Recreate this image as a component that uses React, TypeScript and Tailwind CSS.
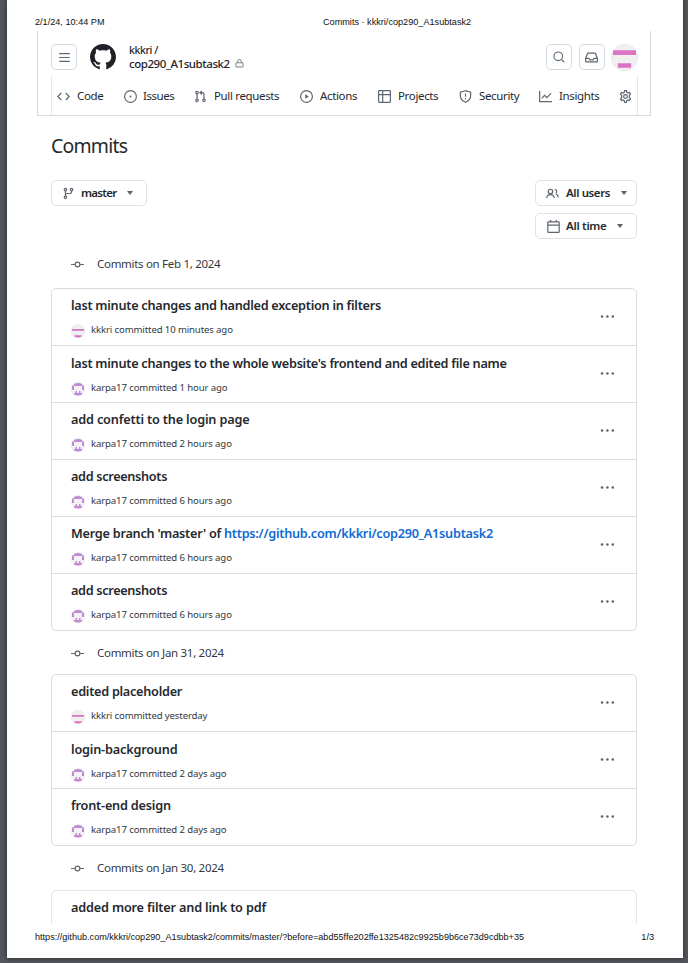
import React from "react";

const ICONS: Record<string, React.ReactNode> = {
  bars: <path d="M1.5 3.25h13M1.5 8h13M1.5 12.75h13" />,
  lock: (
    <>
      <path d="M4.75 6.5V4.2a3.25 3.25 0 0 1 6.5 0v2.3" />
      <rect x="1.75" y="6.75" width="12.5" height="7.5" rx=".8" />
    </>
  ),
  search: (
    <>
      <circle cx="7" cy="7" r="5.75" />
      <path d="m11.2 11.2 3.8 3.8" />
    </>
  ),
  inbox: (
    <path d="M.75 9.2v3.3c0 .6.5 1 1 1h12.5c.6 0 1-.4 1-1V9.2L12.9 3.1a1 1 0 0 0-1-.6H4.1a1 1 0 0 0-1 .6zM.9 9h3.9l1.3 2h3.8l1.3-2h3.9" />
  ),
  code: <path d="M5.2 3.7 1 8l4.2 4.3M10.8 3.7 15 8l-4.2 4.3" />,
  issue: (
    <>
      <circle cx="8" cy="8" r="7.25" />
      <circle cx="8" cy="8" r="1.2" fill="currentColor" stroke="none" />
    </>
  ),
  pull: (
    <>
      <circle cx="3.75" cy="3.25" r="1.5" />
      <circle cx="3.75" cy="12.75" r="1.5" />
      <circle cx="12.25" cy="12.75" r="1.5" />
      <path d="M3.75 4.8v6.4M12.25 11.2V5c0-1-.8-1.75-1.75-1.75H8M9.6 1 7.4 3.25l2.2 2.25" />
    </>
  ),
  play: (
    <>
      <circle cx="8" cy="8" r="7.25" />
      <path d="M6.4 5.2v5.6L10.9 8z" fill="currentColor" stroke="none" />
    </>
  ),
  table: (
    <path d="M1.75.75h12.5c.6 0 1 .4 1 1v12.5c0 .6-.4 1-1 1H1.75c-.6 0-1-.4-1-1V1.75c0-.6.4-1 1-1zM.75 5.75h14.5M5.75.75v14.5" />
  ),
  shield: (
    <>
      <path d="M8 .9 1.7 2.8v4.4c0 3.6 2.2 6.4 6.3 7.9 4.1-1.5 6.3-4.3 6.3-7.9V2.8z" />
      <path d="M8 4.5v3.8" />
      <circle cx="8" cy="10.7" r=".95" fill="currentColor" stroke="none" />
    </>
  ),
  graph: <path d="M.75 1v13.25H16M3.5 10.2l3.3-3.6 2.9 2.9 5.2-5.3" />,
  gear: (
    <>
      <path d="M6.9.9h2.2l.5 2 1.4.8 2-.6 1.2 2-1.5 1.5v2.8l1.5 1.5-1.2 2-2-.6-1.4.8-.5 2H6.9l-.5-2-1.4-.8-2 .6-1.2-2 1.5-1.5V6.6L1.8 5.1l1.2-2 2 .6 1.4-.8z" />
      <circle cx="8" cy="8" r="2.25" />
    </>
  ),
  branch: (
    <>
      <circle cx="4.25" cy="3.25" r="1.5" />
      <circle cx="4.25" cy="12.75" r="1.5" />
      <circle cx="11.75" cy="3.25" r="1.5" />
      <path d="M4.25 4.8v6.4M11.75 4.8v1.4c0 1-.8 1.8-1.75 1.8H6c-1 0-1.75.8-1.75 1.8" />
    </>
  ),
  people: (
    <>
      <circle cx="5.5" cy="5.5" r="2.75" />
      <path d="M.75 13.5a4.8 4.8 0 0 1 9.5 0M10.8 3.2a2.6 2.6 0 0 1 1.1 4.9M12 8.3c1.7.7 2.9 2.3 3.2 4.6" />
    </>
  ),
  calendar: (
    <path d="M1.9 2.25h12.2c.5 0 .9.4.9.9v11.2c0 .5-.4.9-.9.9H1.9c-.5 0-.9-.4-.9-.9V3.15c0-.5.4-.9.9-.9zM1 6.4h14M4.5 0v2.7M11.5 0v2.7" />
  ),
  commit: (
    <>
      <circle cx="8" cy="8" r="2.9" />
      <path d="M0 8h5M11 8h5" />
    </>
  ),
};

function Icon({ name, className = "" }: { name: string; className?: string }) {
  return (
    <svg viewBox="0 0 16 16" fill="none" stroke="currentColor" strokeWidth="1.5" className={`shrink-0 overflow-visible text-[#5f6770] ${className}`}>
      {ICONS[name]}
    </svg>
  );
}

function GithubMark() {
  return (
    <svg viewBox="0 0 16 16" className="h-[26px] w-[26px] shrink-0" fill="#1f2328">
      <path d="M8 0c4.42 0 8 3.58 8 8a8.013 8.013 0 0 1-5.45 7.59c-.4.08-.55-.17-.55-.38 0-.27.01-1.13.01-2.2 0-.75-.25-1.23-.54-1.48 1.78-.2 3.65-.88 3.65-3.95 0-.88-.31-1.59-.82-2.15.08-.2.36-1.02-.08-2.12 0 0-.67-.22-2.2.82-.64-.18-1.32-.27-2-.27-.68 0-1.36.09-2 .27-1.53-1.03-2.2-.82-2.2-.82-.44 1.1-.16 1.92-.08 2.12-.51.56-.82 1.28-.82 2.15 0 3.06 1.86 3.75 3.64 3.95-.23.2-.44.55-.51 1.07-.46.21-1.61.55-2.33-.66-.15-.24-.6-.83-1.23-.82-.67.01-.27.38.01.53.34.19.73.9.82 1.13.16.45.68 1.31 2.69.94 0 .67.01 1.3.01 1.49 0 .21-.15.45-.55.38A7.995 7.995 0 0 1 0 8c0-4.42 3.58-8 8-8Z" />
    </svg>
  );
}

function KkkriAvatar() {
  return (
    <svg viewBox="0 0 27 27" className="h-[27px] w-[27px] shrink-0">
      <circle cx="13.5" cy="13.5" r="13.2" fill="#f0f0f0" stroke="#dfe1e3" strokeWidth=".6" />
      <path d="M2 6.3h23v4.8H2zM6.8 19.2h13.4v4.6H6.8z" fill="#db74c4" />
    </svg>
  );
}

function KkkriSmallAvatar() {
  return (
    <svg viewBox="0 0 14 14" className="mt-[1px] h-[14px] w-[14px] shrink-0">
      <circle cx="7" cy="7" r="6.8" fill="#f0f0f0" stroke="#e4e1e6" strokeWidth=".4" />
      <path d="M1 5h12v1.8H1zM3.4 11.2h7.2v1.2c-2 1.4-5.2 1.4-7.2 0z" fill="#d873c2" />
    </svg>
  );
}

function KarpaAvatar() {
  return (
    <svg viewBox="0 0 14 14" className="mt-[1px] h-[14px] w-[14px] shrink-0">
      <circle cx="7" cy="7" r="6.8" fill="#f3f1f4" stroke="#e4e1e6" strokeWidth=".4" />
      <path d="M3 2Q7 0 11 2v1.5h2V8h-2V4H3v4H1V3.5h2zM3 11h1.5V9H6v2h2V9h1.5v2H11v1.5Q7 14.4 3 12.5z" fill="#c08bd4" />
    </svg>
  );
}

function Caret() {
  return <span className="ml-[1px] border-x-[3.5px] border-t-[4px] border-x-transparent border-t-[#59636e]" />;
}

function NavItem({ icon, label, className }: { icon: string; label: string; className: string }) {
  return (
    <div className={`flex shrink-0 items-center ${className}`}>
      <Icon name={icon} className="h-[13px] w-[13px]" />
      <span>{label}</span>
    </div>
  );
}

type Commit = { title: string; link?: string; user: string; when: string; height: string; pad?: string; tracking?: string };

function CommitRow({ c, last }: { c: Commit; last: boolean }) {
  return (
    <div className={`flex justify-between pr-[21px] pl-[19px] ${c.height} ${last ? "" : "border-b border-[#dcdfe2]"}`}>
      <div className={c.pad ?? "pt-[6px]"}>
        <div className={`h-[20px] text-[12.7px] leading-[20px] font-semibold text-[#25292e] ${c.tracking ?? "tracking-[-0.27px]"}`}>
          {c.title}
          {c.link && <span className="text-[#0f69d2]">{c.link}</span>}
        </div>
        <div className="mt-[6px] flex h-[18px] items-center gap-[6px] text-[9.6px] leading-[18px] tracking-[-0.13px] text-[#33383d]">
          {c.user === "kkkri" ? <KkkriSmallAvatar /> : <KarpaAvatar />}
          <span>
            {c.user} committed {c.when}
          </span>
        </div>
      </div>
      <svg viewBox="0 0 15 3" className="mb-[1px] h-[3px] w-[15px] self-center fill-[#59636e]">
        <circle cx="2" cy="1.5" r="1.25" />
        <circle cx="7.4" cy="1.5" r="1.25" />
        <circle cx="12.8" cy="1.5" r="1.25" />
      </svg>
    </div>
  );
}

function DayHeading({ label, className }: { label: string; className: string }) {
  return (
    <div className={`flex items-center gap-[13px] pl-[20px] text-[11.5px] leading-none tracking-[-0.3px] text-[#33383d] ${className}`}>
      <Icon name="commit" className="h-[13px] w-[13px]" />
      <span>{label}</span>
    </div>
  );
}

const FEB1: Commit[] = [
  { title: "last minute changes and handled exception in filters", user: "kkkri", when: "10 minutes ago", height: "h-[57px]" },
  { title: "last minute changes to the whole website's frontend and edited file name", user: "karpa17", when: "1 hour ago", height: "h-[57px]", pad: "pt-[7px]" },
  { title: "add confetti to the login page", user: "karpa17", when: "2 hours ago", height: "h-[57px]", tracking: "tracking-[-0.17px]" },
  { title: "add screenshots", user: "karpa17", when: "6 hours ago", height: "h-[57px]", tracking: "tracking-[-0.33px]" },
  { title: "Merge branch 'master' of ", link: "https://github.com/kkkri/cop290_A1subtask2", user: "karpa17", when: "6 hours ago", height: "h-[57px]", tracking: "tracking-[-0.25px]" },
  { title: "add screenshots", user: "karpa17", when: "6 hours ago", height: "h-[56px]", tracking: "tracking-[-0.33px]" },
];

const JAN31: Commit[] = [
  { title: "edited placeholder", user: "kkkri", when: "yesterday", height: "h-[57px]" },
  { title: "login-background", user: "karpa17", when: "2 days ago", height: "h-[57px]", pad: "pt-[7px]", tracking: "tracking-[-0.19px]" },
  { title: "front-end design", user: "karpa17", when: "2 days ago", height: "h-[56px]", tracking: "tracking-[-0.2px]" },
];

function CommitList({ commits }: { commits: Commit[] }) {
  return (
    <div className="rounded-[5px] border border-[#d8dcdf]">
      {commits.map((c, i) => (
        <CommitRow key={i} c={c} last={i === commits.length - 1} />
      ))}
    </div>
  );
}

export default function App() {
  return (
    <div className="h-[963px] w-[688px] overflow-hidden bg-[#54585d] pr-[5px] pl-[7px] font-['Noto_Sans','Open_Sans',sans-serif]">
      <div className="flex h-[958px] flex-col bg-white shadow-[0_0_5px_1px_#33373b]">
        <div className="flex h-[31px] shrink-0 items-center pt-[14px] pl-[28px] font-['Liberation_Sans',Arial,sans-serif] text-[9.13px] leading-none text-[#111]">
          <span className="w-[288px]">2/1/24, 10:44 PM</span>
          <span>Commits · kkkri/cop290_A1subtask2</span>
        </div>

        <header className="mr-[32px] ml-[30px] h-[85px] shrink-0 border-x border-b border-[#d5dade] pr-[12px] pl-[13px]">
          <div className="flex h-[45px] items-center pt-[7px]">
            <div className="flex size-[26px] items-center justify-center rounded-[5px] border border-[#d1d9e0]">
              <Icon name="bars" className="h-[13px] w-[13px]" />
            </div>
            <div className="ml-[13px]">
              <GithubMark />
            </div>
            <div className="ml-[13px] flex-1 text-[11.5px] leading-[13px] font-medium tracking-[-0.44px] text-[#1f2328]">
              <div className="text-[10.5px] leading-[13px] tracking-[-0.4px]">kkkri /</div>
              <div className="flex items-center gap-[5px]">
                <span>cop290_A1subtask2</span>
                <Icon name="lock" className="h-[9px] w-[9px]" />
              </div>
            </div>
            <div className="flex size-[26px] items-center justify-center rounded-[5px] border border-[#d1d9e0]">
              <Icon name="search" className="h-[12px] w-[12px]" />
            </div>
            <div className="mx-[6.5px] flex size-[26px] items-center justify-center rounded-[5px] border border-[#d1d9e0]">
              <Icon name="inbox" className="h-[13px] w-[13px]" />
            </div>
            <KkkriAvatar />
          </div>
          <nav className="flex h-[39px] items-center border-x border-[#e3e7ea] pt-[1px] pl-[5px] text-[11.5px] leading-none tracking-[-0.35px] text-[#25292e]">
            <NavItem icon="code" label="Code" className="w-[67px] gap-[7px]" />
            <NavItem icon="issue" label="Issues" className="w-[70px] gap-[6px] tracking-[-0.45px]" />
            <NavItem icon="pull" label="Pull requests" className="w-[106px] gap-[7px]" />
            <NavItem icon="play" label="Actions" className="w-[78px] gap-[7px]" />
            <NavItem icon="table" label="Projects" className="w-[81px] gap-[7px]" />
            <NavItem icon="shield" label="Security" className="w-[80px] gap-[7px]" />
            <NavItem icon="graph" label="Insights" className="w-[80px] gap-[7px]" />
            <Icon name="gear" className="h-[13px] w-[13px]" />
          </nav>
        </header>

        <main className="mr-[46px] ml-[44px] h-[808px] shrink-0 overflow-hidden">
          <h1 className="h-[64px] pt-[18px] text-[19.4px] leading-[24px] tracking-[-0.75px] text-[#25292e]">Commits</h1>
          <div className="flex h-[59px] items-start justify-between text-[11.5px] leading-none font-semibold tracking-[-0.4px] text-[#25292e]">
            <div className="flex h-[26px] w-[96px] items-center rounded-[5px] border border-[#dfe2e5] pl-[10px]">
              <Icon name="branch" className="h-[13px] w-[13px]" />
              <span className="ml-[6px] w-[45px] tracking-[-0.7px]">master</span>
              <Caret />
            </div>
            <div className="flex flex-col gap-[7px]">
              <div className="flex h-[26px] w-[102px] items-center rounded-[5px] border border-[#dfe2e5] pl-[10px]">
                <Icon name="people" className="h-[13px] w-[13px]" />
                <span className="ml-[7px] w-[54px]">All users</span>
                <Caret />
              </div>
              <div className="flex h-[26px] w-[102px] items-center rounded-[5px] border border-[#dfe2e5] pl-[11px]">
                <Icon name="calendar" className="h-[13px] w-[13px]" />
                <span className="ml-[6px] w-[50px] tracking-[-0.3px]">All time</span>
                <Caret />
              </div>
            </div>
          </div>
          <DayHeading label="Commits on Feb 1, 2024" className="h-[49px] pt-[1px]" />
          <CommitList commits={FEB1} />
          <DayHeading label="Commits on Jan 31, 2024" className="h-[43px] pt-[1px]" />
          <CommitList commits={JAN31} />
          <DayHeading label="Commits on Jan 30, 2024" className="h-[44px]" />
          <div className="h-[60px] rounded-t-[5px] border border-[#e3e6e9] pt-[6px] pl-[19px] text-[12.7px] leading-[20px] font-semibold tracking-[-0.18px] text-[#25292e]">
            added more filter and link to pdf
          </div>
        </main>

        <footer className="flex h-[34px] shrink-0 items-center justify-between pr-[29px] pb-[7px] pl-[28px] font-['Liberation_Sans',Arial,sans-serif] text-[9.11px] leading-none text-[#111]">
          <span>https://github.com/kkkri/cop290_A1subtask2/commits/master/?before=abd55ffe202ffe1325482c9925b9b6ce73d9cdbb+35</span>
          <span>1/3</span>
        </footer>
      </div>
    </div>
  );
}
